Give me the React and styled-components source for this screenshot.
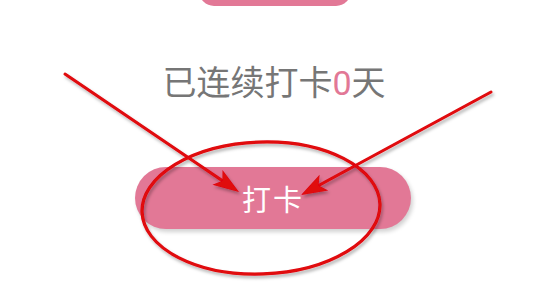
import React from "react";
import styled, { createGlobalStyle } from "styled-components";

const Global = createGlobalStyle`
  html, body { margin: 0; padding: 0; background: #ffffff; }
  body { width: 546px; height: 298px; overflow: hidden; font-family: "Noto Sans CJK SC", "Noto Sans", sans-serif; }
`;

const Page = styled.div`
  position: relative;
  width: 546px;
  height: 298px;
  overflow: hidden;
  display: flex;
  flex-direction: column;
  align-items: center;
  background: #ffffff;
`;

const TopButton = styled.div`
  width: 152px;
  height: 31px;
  margin-top: -25px;
  margin-left: 4px;
  border-radius: 15px;
  background: #e27896;
  flex-shrink: 0;
`;

const Streak = styled.div`
  margin-top: 55px;
  margin-left: 2px;
  font-size: 34px;
  line-height: 40px;
  color: #767676;
  white-space: nowrap;
`;

const Count = styled.span`
  color: #e27896;
  font-family: "Roboto", "Noto Sans", sans-serif;
`;

const CheckIn = styled.button`
  margin-top: 64px;
  width: 276px;
  height: 62px;
  border: none;
  border-radius: 31px;
  background: #e27896;
  color: #ffffff;
  font-family: "Noto Sans CJK SC", sans-serif;
  font-size: 29px;
  letter-spacing: 2px;
  box-shadow: 2px 3px 4px rgba(0, 0, 0, 0.18);
  display: flex;
  align-items: center;
  justify-content: center;
  flex-shrink: 0;
`;

const Annotations = styled.svg`
  position: absolute;
  left: 0;
  top: 0;
  pointer-events: none;
`;

function Arrow({ x1, y1, x2, y2 }) {
  const dx = x2 - x1;
  const dy = y2 - y1;
  const len = Math.hypot(dx, dy);
  const ux = dx / len;
  const uy = dy / len;
  const hl = 26;
  const hw = 9;
  const bx = x2 - ux * hl;
  const by = y2 - uy * hl;
  const nx = -uy;
  const ny = ux;
  const notchX = x2 - ux * (hl - 6);
  const notchY = y2 - uy * (hl - 6);
  return (
    <g>
      <line x1={x1} y1={y1} x2={notchX} y2={notchY} stroke="#e0070b" strokeWidth="3" strokeLinecap="round" />
      <polygon
        points={`${x2},${y2} ${bx + nx * hw},${by + ny * hw} ${notchX},${notchY} ${bx - nx * hw},${by - ny * hw}`}
        fill="#e0070b"
      />
    </g>
  );
}

export default function App() {
  return (
    <>
      <Global />
      <Page>
        <TopButton />
        <Streak>
          已连续打卡<Count>0</Count>天
        </Streak>
        <CheckIn>打卡</CheckIn>
        <Annotations width="546" height="298" viewBox="0 0 546 298">
          <defs>
            <filter id="sh" x="-10%" y="-10%" width="120%" height="130%">
              <feDropShadow dx="1.5" dy="2.5" stdDeviation="1.5" floodColor="#000" floodOpacity="0.3" />
            </filter>
          </defs>
          <g filter="url(#sh)">
            <ellipse cx="261" cy="208" rx="119" ry="66" fill="none" stroke="#e0070b" strokeWidth="3.2" transform="rotate(-2 261 208)" />
            <Arrow x1={65} y1={74} x2={239} y2={192} />
            <Arrow x1={491} y1={92} x2={301} y2={195} />
          </g>
        </Annotations>
      </Page>
    </>
  );
}
